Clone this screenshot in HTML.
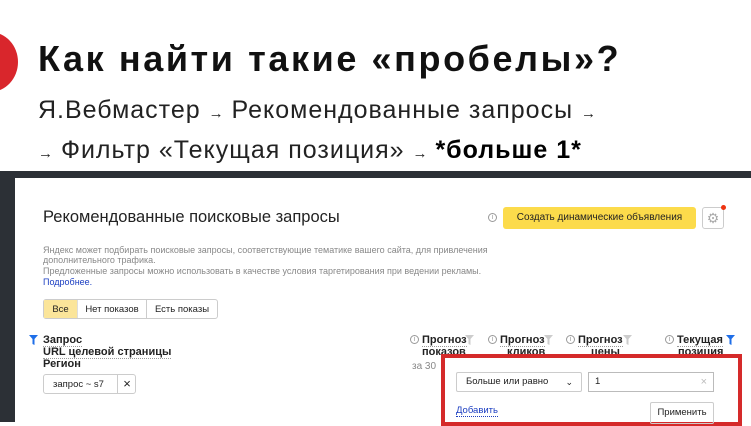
<!DOCTYPE html>
<html><head><meta charset="utf-8"><style>
*{margin:0;padding:0;box-sizing:border-box}
body{width:751px;height:422px;overflow:hidden;background:#fff;position:relative;font-family:"Liberation Sans",sans-serif}
.a{position:absolute;white-space:nowrap}
.h{font-weight:bold;font-size:36px;color:#111;left:38px;top:38px;letter-spacing:2.6px}
.s{font-size:25px;color:#222;left:38px;letter-spacing:1px}
.ar{font-size:15px;letter-spacing:0}
.g{color:#888;font-size:9px}
.b{font-weight:bold;font-size:11px;color:#222}
.ul{border-bottom:1px dotted #999}
.i{width:9px;height:9px;border:1px solid #999;border-radius:50%;font-size:7px;color:#999;text-align:center;line-height:8px}
</style></head><body>
<div class="a" style="left:-38px;top:32px;width:56px;height:60px;border-radius:50%;background:#d9262c"></div>
<div class="a h">Как найти такие «пробелы»?</div>
<div class="a s" style="top:96px">Я.Вебмастер <span class="ar">→</span> Рекомендованные запросы <span class="ar">→</span></div>
<div class="a s" style="top:136px"><span class="ar">→</span> Фильтр «Текущая позиция» <span class="ar">→</span> <b style="color:#000">*больше 1*</b></div>
<div class="a" style="left:0;top:171px;width:751px;height:7px;background:#2c3036"></div>
<div class="a" style="left:0;top:178px;width:15px;height:244px;background:#2c3036"></div>
<div class="a" style="left:43px;top:208px;font-size:16.5px;color:#222">Рекомендованные поисковые запросы</div>
<div class="a g" style="left:43px;top:245px">Яндекс может подбирать поисковые запросы, соответствующие тематике вашего сайта, для привлечения</div>
<div class="a g" style="left:43px;top:255px">дополнительного трафика.</div>
<div class="a g" style="left:43px;top:266px">Предложенные запросы можно использовать в качестве условия таргетирования при ведении рекламы.</div>
<div class="a" style="left:43px;top:277px;font-size:9px;color:#1a3dc1">Подробнее.</div>
<div class="a" style="left:43px;top:299px;width:175px;height:20px;border:1px solid #ccc;border-radius:3px;font-size:9.5px;color:#222">
<div class="a" style="left:0;top:0;width:34px;height:18px;background:#fbe59a;text-align:center;line-height:20px;border-right:1px solid #ddd">Все</div>
<div class="a" style="left:34px;top:0;width:69px;height:18px;text-align:center;line-height:20px;border-right:1px solid #ccc">Нет показов</div>
<div class="a" style="left:103px;top:0;width:70px;height:18px;text-align:center;line-height:20px">Есть показы</div></div>
<svg class="a" style="left:29px;top:335px" width="9" height="10"><path d="M0 0H9L5.5 4V10L3.5 9V4Z" fill="#1e6ee8"/></svg>
<div class="a b" style="left:43px;top:334px"><span class="ul">Запрос</span></div>
<div class="a b" style="left:43px;top:346px"><span class="ul">URL целевой страницы</span></div>
<div class="a b" style="left:43px;top:358px">Регион</div>
<div class="a" style="left:43px;top:374px;width:93px;height:20px;border:1px solid #ccc;border-radius:3px;font-size:9.5px;line-height:19px;color:#222"><span style="margin-left:9px">запрос ~ s7</span><div class="a" style="left:73px;top:0;height:18px;border-left:1px solid #ccc;width:19px;text-align:center;font-size:13px;line-height:17px">×</div></div>
<div class="a i" style="left:488px;top:213px">i</div>
<div class="a" style="left:503px;top:207px;width:193px;height:22px;background:#fcdb4b;border-radius:3px;font-size:10px;line-height:22px;text-align:center;color:#222">Создать динамические объявления</div>
<div class="a" style="left:702px;top:207px;width:22px;height:22px;border:1px solid #ccc;border-radius:3px;color:#aaa;text-align:center;line-height:20px;font-size:14px">⚙</div>
<div class="a" style="left:721px;top:205px;width:5px;height:5px;border-radius:50%;background:#e31"></div>
<div class="a i" style="left:410px;top:335px">i</div><div class="a b" style="left:422px;top:334px"><span class="ul">Прогноз</span></div><div class="a b" style="left:422px;top:346px">показов</div>
<svg class="a" style="left:465px;top:335px" width="9" height="10"><path d="M0 0H9L5.5 4V10L3.5 9V4Z" fill="#ccc"/></svg>
<div class="a i" style="left:488px;top:335px">i</div><div class="a b" style="left:500px;top:334px"><span class="ul">Прогноз</span></div><div class="a b" style="left:507px;top:346px">кликов</div>
<svg class="a" style="left:544px;top:335px" width="9" height="10"><path d="M0 0H9L5.5 4V10L3.5 9V4Z" fill="#ccc"/></svg>
<div class="a i" style="left:566px;top:335px">i</div><div class="a b" style="left:578px;top:334px"><span class="ul">Прогноз</span></div><div class="a b" style="left:591px;top:346px">цены</div>
<svg class="a" style="left:623px;top:335px" width="9" height="10"><path d="M0 0H9L5.5 4V10L3.5 9V4Z" fill="#ccc"/></svg>
<div class="a i" style="left:665px;top:335px">i</div><div class="a b" style="left:677px;top:334px"><span class="ul">Текущая</span></div><div class="a b" style="left:678px;top:346px">позиция</div>
<svg class="a" style="left:726px;top:335px" width="9" height="10"><path d="M0 0H9L5.5 4V10L3.5 9V4Z" fill="#1e6ee8"/></svg>
<div class="a" style="left:412px;top:361px;font-size:10px;color:#888">за 30</div>
<div class="a" style="left:441px;top:354px;width:301px;height:72px;border:4px solid #d52a2a;background:#fff">
<div class="a" style="left:11px;top:14px;width:126px;height:20px;border:1px solid #ccc;border-radius:2px;font-size:9.5px;line-height:18px;padding-left:9px;color:#222">Больше или равно<span class="a" style="right:8px;top:0;font-size:9px">⌄</span></div>
<div class="a" style="left:143px;top:14px;width:126px;height:20px;border:1px solid #bbb;font-size:9.5px;line-height:18px;padding-left:6px;color:#222">1<span class="a" style="right:6px;top:0;color:#bbb;font-size:11px">×</span></div>
<div class="a" style="left:11px;top:47px;font-size:9.5px;color:#1a3dc1;border-bottom:1px dotted #1a3dc1">Добавить</div>
<div class="a" style="left:205px;top:44px;width:64px;height:22px;border:1px solid #ccc;border-radius:2px;font-size:9.5px;line-height:20px;text-align:center;color:#222">Применить</div>
</div>
</body></html>
